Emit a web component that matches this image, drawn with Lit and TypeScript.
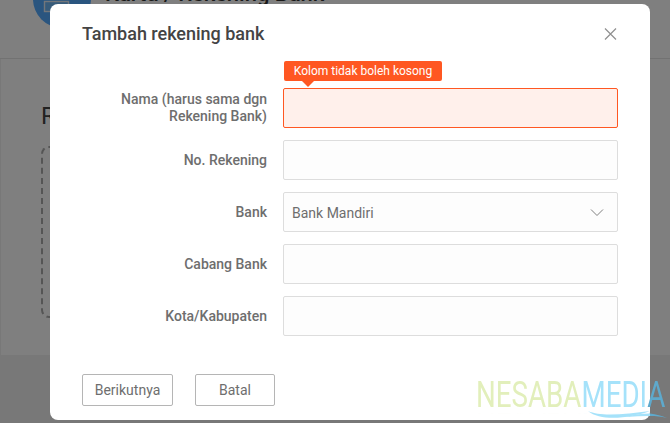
import { LitElement, html, css } from "lit";
import { customElement } from "lit/decorators.js";

@customElement("app-root")
export class AppRoot extends LitElement {
  static styles = css`
    :host {
      display: block;
      position: relative;
      width: 670px;
      height: 423px;
      overflow: hidden;
      font-family: Roboto, "Liberation Sans", sans-serif;
      background: #f0f0f0;
    }
    .page-head {
      height: 59px;
      box-sizing: border-box;
      background: #fff;
      border-bottom: 1px solid #e4e4e4;
      padding-left: 33px;
      display: flex;
      gap: 14px;
      align-items: flex-start;
    }
    .avatar {
      display: block;
      width: 58px;
      height: 58px;
      margin-top: -30px;
      flex: none;
    }
    .page-title {
      margin-top: -22px;
      font-size: 22px;
      font-weight: 500;
      line-height: 32px;
      color: #333;
      white-space: nowrap;
    }
    .card {
      margin-left: 1px;
      height: 296px;
      box-sizing: border-box;
      background: #fff;
      padding: 43px 0 0 40px;
      display: flex;
      flex-direction: column;
      gap: 16px;
    }
    .card-title {
      font-size: 24px;
      line-height: 28px;
      color: #444;
      white-space: nowrap;
    }
    .drop {
      width: 300px;
      height: 172px;
      box-sizing: border-box;
      border: 2px dashed #aaa;
      border-radius: 8px;
    }
    .overlay {
      position: absolute;
      inset: 0;
      background: rgba(0, 0, 0, 0.5);
    }
    .dialog {
      position: absolute;
      left: 50px;
      top: 4px;
      width: 600px;
      height: 416px;
      box-sizing: border-box;
      background: #fff;
      border-radius: 8px;
      padding: 16px 32px 14px;
      display: flex;
      flex-direction: column;
    }
    .dialog-head {
      display: flex;
      align-items: center;
      justify-content: space-between;
      height: 26px;
      padding-right: 1px;
    }
    .dialog-title {
      font-size: 18px;
      font-weight: 500;
      letter-spacing: -0.02px;
      color: #444;
    }
    .close {
      display: block;
      width: 13px;
      height: 13px;
      stroke: #8f8f8f;
      stroke-width: 1.2;
      fill: none;
    }
    .form {
      margin-top: 42px;
      display: flex;
      flex-direction: column;
      gap: 12px;
    }
    .row {
      display: grid;
      grid-template-columns: 185px 335px;
      column-gap: 16px;
      align-items: center;
    }
    .label {
      font-size: 14px;
      font-weight: 500;
      line-height: 17px;
      color: #6e6e6e;
      text-align: right;
    }
    .field {
      position: relative;
      height: 40px;
      box-sizing: border-box;
      background: #fdfdfd;
      border: 1px solid #ddd;
      border-radius: 2px;
      display: flex;
      align-items: center;
      justify-content: space-between;
      padding: 0 13px 0 8px;
      font-size: 14px;
      color: #6e6e6e;
    }
    .field.error {
      background: #fff0eb;
      border-color: #ff5722;
    }
    .value {
      padding-top: 1px;
    }
    .tip {
      position: absolute;
      left: 0;
      top: -28px;
      height: 20px;
      width: 158px;
      box-sizing: border-box;
      border-radius: 2px;
      background: #ff5722;
      color: #fff;
      font-size: 12px;
      line-height: 20px;
      text-align: center;
    }
    .tip::after {
      content: "";
      position: absolute;
      left: 18px;
      top: 20px;
      border: 6px solid transparent;
      border-top-color: #ff5722;
      border-bottom-width: 0;
    }
    .chev {
      display: block;
      width: 14px;
      height: 9px;
      stroke: #808080;
      stroke-width: 1;
      fill: none;
    }
    .actions {
      margin-top: auto;
      display: flex;
      gap: 22px;
    }
    .btn {
      height: 32px;
      box-sizing: border-box;
      background: #fff;
      border: 1px solid #b5b5b5;
      border-radius: 2px;
      font-family: inherit;
      font-size: 14px;
      color: #6e6e6e;
      padding: 0 0 1px;
    }
    .btn.next { width: 91px; }
    .btn.cancel { width: 80px; }
    .mark {
      position: absolute;
      left: 476px;
      top: 378px;
      width: 194px;
      height: 45px;
      pointer-events: none;
    }
    .mark-text {
      display: inline-block;
      font-size: 36px;
      line-height: 34px;
      transform-origin: left top;
      transform: scaleX(0.77);
      white-space: nowrap;
      -webkit-box-reflect: below -4px linear-gradient(transparent 82%, rgba(0, 0, 0, 0.3));
    }
    .mark-a { color: #e2efbb; }
    .mark-b { color: #a5e2fa; }
    .mark-c { color: #5ea9cc; }
    .swoosh {
      position: absolute;
      left: 0;
      top: 0;
      width: 194px;
      height: 45px;
    }
  `;

  private renderRow(label: unknown, body: unknown = "", error = false) {
    return html`<div class="row">
      <div class="label">${label}</div>
      <div class="field ${error ? "error" : ""}">${body}</div>
    </div>`;
  }

  render() {
    return html`
      <div class="page-head">
        <svg class="avatar" viewBox="0 0 58 58">
          <circle cx="29" cy="29" r="29" fill="#54aaff" />
          <rect x="11.5" y="31.5" width="24" height="10" fill="#6fb6f5" stroke="#e4edf6" stroke-width="1.4" />
        </svg>
        <div class="page-title">Kartu / Rekening Bank</div>
      </div>
      <div class="card">
        <div class="card-title">Rekening Saya</div>
        <div class="drop"></div>
      </div>
      <div class="overlay"></div>
      <div class="dialog">
        <div class="dialog-head">
          <div class="dialog-title">Tambah rekening bank</div>
          <svg class="close" viewBox="0 0 13 13"><path d="M1 1.5l11 11M12 1.5L1 12.5" /></svg>
        </div>
        <div class="form">
          ${this.renderRow(
            html`Nama (harus sama dgn<br />Rekening Bank)`,
            html`<div class="tip">Kolom tidak boleh kosong</div>`,
            true
          )}
          ${this.renderRow("No. Rekening")}
          ${this.renderRow(
            "Bank",
            html`<span class="value">Bank Mandiri</span>
              <svg class="chev" viewBox="0 0 14 9"><path d="M1 1.5l6 6 6-6" /></svg>`
          )}
          ${this.renderRow("Cabang Bank")}
          ${this.renderRow("Kota/Kabupaten")}
        </div>
        <div class="actions">
          <button class="btn next">Berikutnya</button>
          <button class="btn cancel">Batal</button>
        </div>
      </div>
      <div class="mark">
        <span class="mark-text"><span class="mark-a">NESABA</span><span class="mark-b">MEDI</span><span class="mark-c">A</span></span>
        <svg class="swoosh" viewBox="0 0 194 45">
          <path fill="#a5e2fa" d="M112 33C125 39 150 36 174 33 155 40 125 44 112 33z" />
          <path fill="#a5e2fa" d="M150 39C158 36 166 35.500 174 35.500V38C166 38 158 38.500 150 39z" />
          <path fill="#5ea9cc" d="M174 35.500C180 36 186 38 191 40 185 38.500 180 38 174 38z" />
        </svg>
      </div>
    `;
  }
}
